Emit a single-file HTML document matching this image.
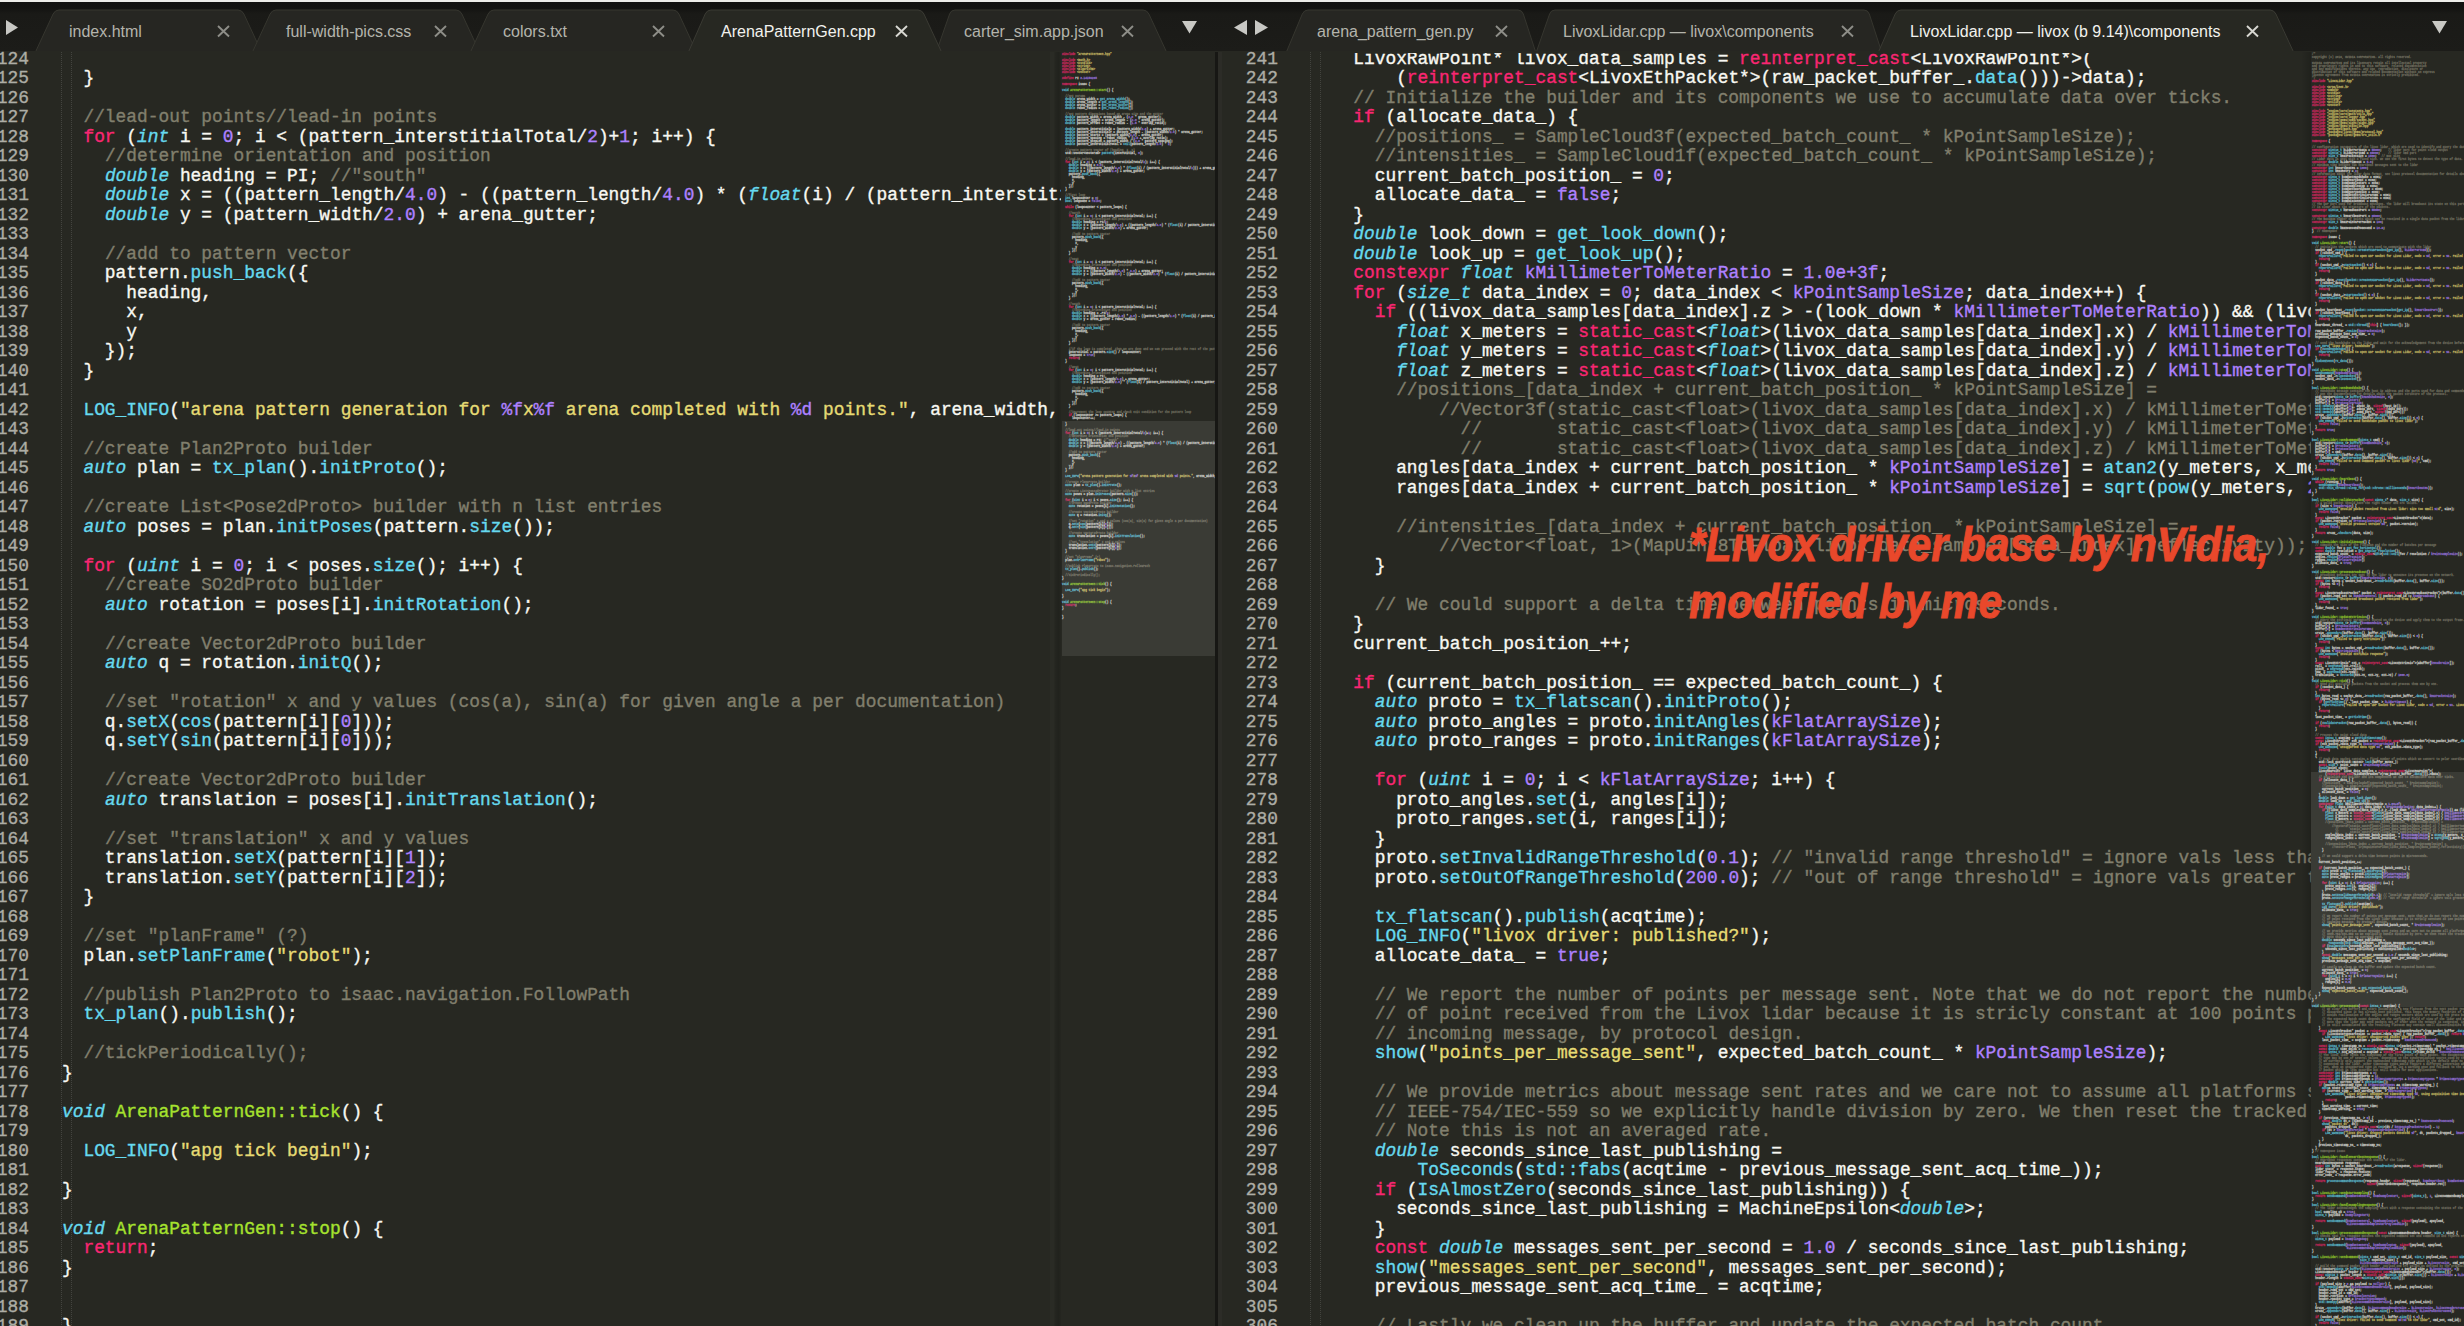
<!DOCTYPE html>
<html><head><meta charset="utf-8">
<style>
html,body{margin:0;padding:0;width:2464px;height:1326px;overflow:hidden;background:#272822;}
body{position:relative;font-family:"Liberation Sans",sans-serif;}
.abs{position:absolute}
.code,.nums{position:absolute;font-family:"Liberation Mono",monospace;font-size:17.87px;line-height:19.5px;white-space:pre;color:#F8F8F2;margin:0;-webkit-text-stroke:0.35px currentColor}
.code b{font-weight:normal}
.code i{font-style:italic;color:#66D9EF}
.cm{color:#817f6d}.str{color:#E6DB74}.num{color:#AE81FF}.kw{color:#F92672}.fn{color:#66D9EF}.ent{color:#A6E22E}
.nums{text-align:right;color:#adada5}
.clip{position:absolute;overflow:hidden}
.mm{position:absolute;font-family:"Liberation Mono",monospace;font-size:3.4px;line-height:3.02px;white-space:pre;color:#F8F8F2;margin:0;-webkit-text-stroke:0.3px currentColor;opacity:0.72;transform:scaleX(0.814);transform-origin:0 0}
.mm b{font-weight:normal}
.mm i{font-style:normal;color:#66D9EF}
.guide{position:absolute;width:1px;background:repeating-linear-gradient(to bottom,rgba(255,255,255,0.13) 0 1px,transparent 1px 2px)}
#tabbar{position:absolute;left:0;top:0;width:2464px;height:51px;background:linear-gradient(to bottom,#111110 0px,#131311 8px,#1a1a17 14px,#1c1c19 51px)}
#tabbar .strip{position:absolute;left:0;top:0;width:2464px;height:2px;background:#ecece8}
.tt{position:absolute;font-size:16px;color:#b4b4ac;white-space:pre;line-height:20px}
.tt.act{color:#f2f2ee}
.red{position:absolute;font-family:"Liberation Sans",sans-serif;font-weight:bold;font-style:italic;font-size:48px;color:#E9482B;white-space:pre;transform:scaleX(0.89);transform-origin:0 0;line-height:57px;-webkit-text-stroke:0.9px #E9482B}
</style></head><body>

<!-- LEFT PANE -->
<div class="clip" style="left:0;top:0;width:1215px;height:1326px;">
  <div class="nums" style="left:-71px;top:49.6px;width:100px;">124
125
126
127
128
129
130
131
132
133
134
135
136
137
138
139
140
141
142
143
144
145
146
147
148
149
150
151
152
153
154
155
156
157
158
159
160
161
162
163
164
165
166
167
168
169
170
171
172
173
174
175
176
177
178
179
180
181
182
183
184
185
186
187
188
189</div>
  <div class="guide" style="left:61px;top:52px;height:1274px;"></div>
  <div class="guide" style="left:71px;top:52px;height:1274px;"></div>
  <div class="clip" style="left:0;top:52.5px;width:1061px;height:1274px;">
    <div class="code" style="left:62px;top:-2.9px;">
  }

  <b class="cm">//lead-out points//lead-in points</b>
  <b class="kw">for</b> (<i>int</i> i = <b class="num">0</b>; i &lt; (pattern_interstitialTotal/<b class="num">2</b>)+<b class="num">1</b>; i++) {
    <b class="cm">//determine orientation and position</b>
    <i>double</i> heading = PI; <b class="cm">//"south"</b>
    <i>double</i> x = ((pattern_length/<b class="num">4.0</b>) - ((pattern_length/<b class="num">4.0</b>) * (<i>float</i>(i) / (pattern_interstitialTotal/<b class="num">2</b>)))) + arena_gutter;
    <i>double</i> y = (pattern_width/<b class="num">2.0</b>) + arena_gutter;

    <b class="cm">//add to pattern vector</b>
    pattern.<b class="fn">push_back</b>({
      heading,
      x,
      y
    });
  }

  <b class="fn">LOG_INFO</b>(<b class="str">"arena pattern generation for </b><b class="num">%f</b><b class="str">x</b><b class="num">%f</b><b class="str"> arena completed with </b><b class="num">%d</b><b class="str"> points."</b>, arena_width, arena_length, pattern.<b class="fn">size</b>());

  <b class="cm">//create Plan2Proto builder</b>
  <i>auto</i> plan = <b class="fn">tx_plan</b>().<b class="fn">initProto</b>();

  <b class="cm">//create List&lt;Pose2dProto&gt; builder with n list entries</b>
  <i>auto</i> poses = plan.<b class="fn">initPoses</b>(pattern.<b class="fn">size</b>());

  <b class="kw">for</b> (<i>uint</i> i = <b class="num">0</b>; i &lt; poses.<b class="fn">size</b>(); i++) {
    <b class="cm">//create SO2dProto builder</b>
    <i>auto</i> rotation = poses[i].<b class="fn">initRotation</b>();

    <b class="cm">//create Vector2dProto builder</b>
    <i>auto</i> q = rotation.<b class="fn">initQ</b>();

    <b class="cm">//set "rotation" x and y values (cos(a), sin(a) for given angle a per documentation)</b>
    q.<b class="fn">setX</b>(<b class="fn">cos</b>(pattern[i][<b class="num">0</b>]));
    q.<b class="fn">setY</b>(<b class="fn">sin</b>(pattern[i][<b class="num">0</b>]));

    <b class="cm">//create Vector2dProto builder</b>
    <i>auto</i> translation = poses[i].<b class="fn">initTranslation</b>();

    <b class="cm">//set "translation" x and y values</b>
    translation.<b class="fn">setX</b>(pattern[i][<b class="num">1</b>]);
    translation.<b class="fn">setY</b>(pattern[i][<b class="num">2</b>]);
  }

  <b class="cm">//set "planFrame" (?)</b>
  plan.<b class="fn">setPlanFrame</b>(<b class="str">"robot"</b>);

  <b class="cm">//publish Plan2Proto to isaac.navigation.FollowPath</b>
  <b class="fn">tx_plan</b>().<b class="fn">publish</b>();

  <b class="cm">//tickPeriodically();</b>
}

<i>void</i> <b class="ent">ArenaPatternGen::tick</b>() {

  <b class="fn">LOG_INFO</b>(<b class="str">"apg tick begin"</b>);

}

<i>void</i> <b class="ent">ArenaPatternGen::stop</b>() {
  <b class="kw">return</b>;
}


}</div>
  </div>
  <div class="clip" style="left:1059px;top:52px;width:156px;height:1274px;">
    <div class="mm" style="left:3px;top:0.5px;"><b class="kw">#include</b> <b class="str">"ArenaPatternGen.hpp"</b>

<b class="kw">#include</b> <b class="str">&lt;math.h&gt;</b>
<b class="kw">#include</b> <b class="str">&lt;cstdlib&gt;</b>
<b class="kw">#include</b> <b class="str">&lt;string&gt;</b>
<b class="kw">#include</b> <b class="str">&lt;algorithm&gt;</b>
<b class="kw">#include</b> <b class="str">&lt;vector&gt;</b>

<b class="kw">#define</b> PI <b class="num">3.14159265</b>

<b class="kw">namespace</b> isaac {

<i>void</i> <b class="ent">ArenaPatternGen::start</b>() {

  <b class="cm">//get params</b>
  <i>double</i> arena_width = <b class="fn">get_arena_width</b>();
  <i>double</i> arena_length = <b class="fn">get_arena_length</b>();
  <i>double</i> arena_gutter = <b class="fn">get_arena_gutter</b>();
  <i>double</i> robot_radius = <b class="fn">get_robot_radius</b>();

  <b class="cm">//set pattern dimensions based on arena size and the gutter</b>
  <i>double</i> pattern_width = arena_width - (<b class="num">2.0</b> * arena_gutter);
  <i>double</i> pattern_length = arena_length - (<b class="num">2.0</b> * arena_gutter);
  <i>double</i> pattern_offset = robot_radius - (<b class="num">1.5</b> * overlap_ratio);

  <i>double</i> pattern_interstitialX = (pattern_width/<b class="num">2.0</b>) + arena_gutter;
  <i>double</i> pattern_interstitialY = pattern_length - (pattern_width/<b class="num">2.0</b>) * arena_gutter;
  <i>double</i> pattern_startX = (pattern_width/<b class="num">2.0</b>) - arena_gutter;
  <i>double</i> pattern_spacing = robot_radius * (<b class="num">1.5</b> + overlap_ratio);
  <i>double</i> pattern_stepLen = pattern_width / (<b class="num">2.0</b> * pattern_spacing);
  <i>double</i> pattern_interstitialTotal = <b class="fn">ceil</b>(pattern_length/<b class="num">2.0</b>) * <b class="num">2</b>;

  <b class="cm">//create pattern vector of (heading, x, y)</b>
  std::vector&lt;Vector3d&gt; <b class="fn">pattern</b>(interstitial, <b class="num">0</b>);

  <b class="cm">//lead-in points</b>
  <b class="kw">for</b> (<i>int</i> i = <b class="num">0</b>; i &lt; (pattern_interstitialTotal/<b class="num">2</b>); i++) {
    <i>double</i> heading = <b class="num">0.0</b>;
    <i>double</i> x = ((pattern_length/<b class="num">4.0</b>) * (<i>float</i>(i) / (pattern_interstitialTotal/<b class="num">2</b>))) + arena_gutter;
    <i>double</i> y = (pattern_width/<b class="num">2.0</b>) + arena_gutter;
    pattern.<b class="fn">push_back</b>({
      heading,
      x,
      y
    });
  }

  <b class="cm">//first loop</b>
  <i>int</i> loopCounter = <b class="num">0</b>;
  <i>bool</i> loopDone = <b class="num">false</b>;

  <b class="kw">while</b> (loopCounter &lt; pattern_loops) {

    <b class="cm">//north</b>
    <b class="kw">for</b> (<i>int</i> i = <b class="num">0</b>; i &lt; pattern_interstitialTotal; i++) {
      <b class="cm">//determine orientation and position</b>
      <i>double</i> heading = PI/<b class="num">2</b>;
      <i>double</i> x = (pattern_length/<b class="num">2.0</b>) + ((pattern_length/<b class="num">4.0</b>) * (<i>float</i>(i) / pattern_interstitialTotal)) + arena_gutter;
      <i>double</i> y = (pattern_width/<b class="num">2.0</b>) + arena_gutter;

      <b class="cm">//add to pattern vector</b>
      pattern.<b class="fn">push_back</b>({
        heading,
        x,
        y
      });
    }

    <b class="cm">//east</b>
    <b class="kw">for</b> (<i>int</i> i = <b class="num">0</b>; i &lt; pattern_interstitialTotal; i++) {
      <b class="cm">//determine orientation and position</b>
      <i>double</i> heading = <b class="num">0.0</b>;
      <i>double</i> x = ((pattern_length/<b class="num">4.0</b>) * <b class="num">3.0</b>) + arena_gutter;
      <i>double</i> y = (pattern_width/<b class="num">2.0</b>) - ((pattern_width/<b class="num">2.0</b>) * (<i>float</i>(i) / pattern_interstitialTotal)) + arena_gutter;

      <b class="cm">//add to pattern vector</b>
      pattern.<b class="fn">push_back</b>({
        heading,
        x,
        y
      });
    }

    <b class="cm">//south</b>
    <b class="kw">for</b> (<i>int</i> i = <b class="num">0</b>; i &lt; pattern_interstitialTotal; i++) {
      <b class="cm">//determine orientation and position</b>
      <i>double</i> heading = -PI/<b class="num">2</b>;
      <i>double</i> x = ((pattern_length/<b class="num">4.0</b>) * <b class="num">3.0</b>) - ((pattern_length/<b class="num">2.0</b>) * (<i>float</i>(i) / pattern_interstitialTotal));
      <i>double</i> y = arena_gutter + robot_radius;

      <b class="cm">//add to pattern vector</b>
      pattern.<b class="fn">push_back</b>({
        heading,
        x,
        y
      });
    }

    <b class="cm">//if the loop is completed, then we are done and we can proceed with the rest of the pattern</b>
    interstitial = pattern.<b class="fn">size</b>() / loopCounter;
    loopDone = <b class="num">true</b>;
    <b class="kw">return</b>;
  }

    <b class="cm">//west</b>
    <b class="kw">for</b> (<i>int</i> i = <b class="num">0</b>; i &lt; pattern_interstitialTotal; i++) {
      <b class="cm">//determine orientation and position</b>
      <i>double</i> heading = PI;
      <i>double</i> x = (pattern_length/<b class="num">4.0</b>) + arena_gutter;
      <i>double</i> y = (pattern_width/<b class="num">2.0</b>) * (<i>float</i>(i) / pattern_interstitialTotal) + arena_gutter;

      <b class="cm">//add to pattern vector</b>
      pattern.<b class="fn">push_back</b>({
        heading,
        x,
        y
      });
    }

    <b class="cm">//increment the loop counter and check exit condition for the pattern loop</b>
    <b class="kw">if</b> (loopCounter &gt;= pattern_loops) {
      loopCounter++;

  }

  <b class="cm">//lead-out points//lead-in points</b>
  <b class="kw">for</b> (<i>int</i> i = <b class="num">0</b>; i &lt; (pattern_interstitialTotal/<b class="num">2</b>)+<b class="num">1</b>; i++) {
    <b class="cm">//determine orientation and position</b>
    <i>double</i> heading = PI; <b class="cm">//"south"</b>
    <i>double</i> x = ((pattern_length/<b class="num">4.0</b>) - ((pattern_length/<b class="num">4.0</b>) * (<i>float</i>(i) / (pattern_interstitialTotal/<b class="num">2</b>)))) + arena_gutter;
    <i>double</i> y = (pattern_width/<b class="num">2.0</b>) + arena_gutter;

    <b class="cm">//add to pattern vector</b>
    pattern.<b class="fn">push_back</b>({
      heading,
      x,
      y
    });
  }

  <b class="fn">LOG_INFO</b>(<b class="str">"arena pattern generation for </b><b class="num">%f</b><b class="str">x</b><b class="num">%f</b><b class="str"> arena completed with </b><b class="num">%d</b><b class="str"> points."</b>, arena_width, arena_length, pattern.<b class="fn">size</b>());

  <b class="cm">//create Plan2Proto builder</b>
  <i>auto</i> plan = <b class="fn">tx_plan</b>().<b class="fn">initProto</b>();

  <b class="cm">//create List&lt;Pose2dProto&gt; builder with n list entries</b>
  <i>auto</i> poses = plan.<b class="fn">initPoses</b>(pattern.<b class="fn">size</b>());

  <b class="kw">for</b> (<i>uint</i> i = <b class="num">0</b>; i &lt; poses.<b class="fn">size</b>(); i++) {
    <b class="cm">//create SO2dProto builder</b>
    <i>auto</i> rotation = poses[i].<b class="fn">initRotation</b>();

    <b class="cm">//create Vector2dProto builder</b>
    <i>auto</i> q = rotation.<b class="fn">initQ</b>();

    <b class="cm">//set "rotation" x and y values (cos(a), sin(a) for given angle a per documentation)</b>
    q.<b class="fn">setX</b>(<b class="fn">cos</b>(pattern[i][<b class="num">0</b>]));
    q.<b class="fn">setY</b>(<b class="fn">sin</b>(pattern[i][<b class="num">0</b>]));

    <b class="cm">//create Vector2dProto builder</b>
    <i>auto</i> translation = poses[i].<b class="fn">initTranslation</b>();

    <b class="cm">//set "translation" x and y values</b>
    translation.<b class="fn">setX</b>(pattern[i][<b class="num">1</b>]);
    translation.<b class="fn">setY</b>(pattern[i][<b class="num">2</b>]);
  }

  <b class="cm">//set "planFrame" (?)</b>
  plan.<b class="fn">setPlanFrame</b>(<b class="str">"robot"</b>);

  <b class="cm">//publish Plan2Proto to isaac.navigation.FollowPath</b>
  <b class="fn">tx_plan</b>().<b class="fn">publish</b>();

  <b class="cm">//tickPeriodically();</b>
}

<i>void</i> <b class="ent">ArenaPatternGen::tick</b>() {

  <b class="fn">LOG_INFO</b>(<b class="str">"apg tick begin"</b>);

}

<i>void</i> <b class="ent">ArenaPatternGen::stop</b>() {
  <b class="kw">return</b>;
}


}
</div>
  </div>
  <div class="abs" style="left:1062px;top:421px;width:153px;height:235px;background:rgba(255,255,255,0.09)"></div>
</div>
<div class="abs" style="left:1215px;top:52px;width:3px;height:1274px;background:#171714"></div>
<div class="abs" style="left:1218px;top:52px;width:4px;height:1274px;background:#2c2c27"></div>
<div class="abs" style="left:1050px;top:52px;width:4px;height:1274px;background:rgba(255,255,255,0.015)"></div>
<div class="abs" style="left:1055px;top:52px;width:6px;height:1274px;background:linear-gradient(to right,rgba(0,0,0,0.06),rgba(0,0,0,0.16) 60%,rgba(0,0,0,0.05))"></div>

<!-- RIGHT PANE -->
<div class="clip" style="left:1218px;top:0;width:1246px;height:1326px;">
  <div class="nums" style="left:-40px;top:49.6px;width:100px;">241
242
243
244
245
246
247
248
249
250
251
252
253
254
255
256
257
258
259
260
261
262
263
264
265
266
267
268
269
270
271
272
273
274
275
276
277
278
279
280
281
282
283
284
285
286
287
288
289
290
291
292
293
294
295
296
297
298
299
300
301
302
303
304
305
306</div>
  <div class="guide" style="left:92px;top:52px;height:1274px;"></div>
  <div class="guide" style="left:102px;top:52px;height:1274px;"></div>
  <div class="clip" style="left:0;top:52.5px;width:1093px;height:1274px;">
    <div class="code" style="left:92.4px;top:-2.9px;">    LivoxRawPoint* livox_data_samples = <b class="kw">reinterpret_cast</b>&lt;LivoxRawPoint*&gt;(
        (<b class="kw">reinterpret_cast</b>&lt;LivoxEthPacket*&gt;(raw_packet_buffer_.<b class="fn">data</b>()))-&gt;data);
    <b class="cm">// Initialize the builder and its components we use to accumulate data over ticks.</b>
    <b class="kw">if</b> (allocate_data_) {
      <b class="cm">//positions_ = SampleCloud3f(expected_batch_count_ * kPointSampleSize);</b>
      <b class="cm">//intensities_ = SampleCloud1f(expected_batch_count_ * kPointSampleSize);</b>
      current_batch_position_ = <b class="num">0</b>;
      allocate_data_ = <b class="num">false</b>;
    }
    <i>double</i> look_down = <b class="fn">get_look_down</b>();
    <i>double</i> look_up = <b class="fn">get_look_up</b>();
    <b class="kw">constexpr</b> <i>float</i> <b class="num">kMillimeterToMeterRatio</b> = <b class="num">1.0e+3f</b>;
    <b class="kw">for</b> (<i>size_t</i> data_index = <b class="num">0</b>; data_index &lt; <b class="num">kPointSampleSize</b>; data_index++) {
      <b class="kw">if</b> ((livox_data_samples[data_index].z &gt; -(look_down * <b class="num">kMillimeterToMeterRatio</b>)) &amp;&amp; (livox_data_samples[data_index].z &lt; (look_up * <b class="num">kMillimeterToMeterRatio</b>))) {
        <i>float</i> x_meters = <b class="kw">static_cast</b>&lt;<i>float</i>&gt;(livox_data_samples[data_index].x) / <b class="num">kMillimeterToMeterRatio</b>;
        <i>float</i> y_meters = <b class="kw">static_cast</b>&lt;<i>float</i>&gt;(livox_data_samples[data_index].y) / <b class="num">kMillimeterToMeterRatio</b>;
        <i>float</i> z_meters = <b class="kw">static_cast</b>&lt;<i>float</i>&gt;(livox_data_samples[data_index].z) / <b class="num">kMillimeterToMeterRatio</b>;
        <b class="cm">//positions_[data_index + current_batch_position_ * kPointSampleSize] =</b>
            <b class="cm">//Vector3f(static_cast&lt;float&gt;(livox_data_samples[data_index].x) / kMillimeterToMeterRatio,</b>
              <b class="cm">//       static_cast&lt;float&gt;(livox_data_samples[data_index].y) / kMillimeterToMeterRatio,</b>
              <b class="cm">//       static_cast&lt;float&gt;(livox_data_samples[data_index].z) / kMillimeterToMeterRatio);</b>
        angles[data_index + current_batch_position_ * <b class="num">kPointSampleSize</b>] = <b class="fn">atan2</b>(y_meters, x_meters);
        ranges[data_index + current_batch_position_ * <b class="num">kPointSampleSize</b>] = <b class="fn">sqrt</b>(<b class="fn">pow</b>(y_meters, <b class="num">2</b>) + <b class="fn">pow</b>(x_meters, <b class="num">2</b>));

        <b class="cm">//intensities_[data_index + current_batch_position_ * kPointSampleSize] =</b>
            <b class="cm">//Vector&lt;float, 1&gt;(MapUint8ToFloat(livox_data_samples[data_index].reflectivity));</b>
      }

      <b class="cm">// We could support a delta time between points in microseconds.</b>
    }
    current_batch_position_++;

    <b class="kw">if</b> (current_batch_position_ == expected_batch_count_) {
      <i>auto</i> proto = <b class="fn">tx_flatscan</b>().<b class="fn">initProto</b>();
      <i>auto</i> proto_angles = proto.<b class="fn">initAngles</b>(<b class="num">kFlatArraySize</b>);
      <i>auto</i> proto_ranges = proto.<b class="fn">initRanges</b>(<b class="num">kFlatArraySize</b>);

      <b class="kw">for</b> (<i>uint</i> i = <b class="num">0</b>; i &lt; <b class="num">kFlatArraySize</b>; i++) {
        proto_angles.<b class="fn">set</b>(i, angles[i]);
        proto_ranges.<b class="fn">set</b>(i, ranges[i]);
      }
      proto.<b class="fn">setInvalidRangeThreshold</b>(<b class="num">0.1</b>); <b class="cm">// "invalid range threshold" = ignore vals less than this</b>
      proto.<b class="fn">setOutOfRangeThreshold</b>(<b class="num">200.0</b>); <b class="cm">// "out of range threshold" = ignore vals greater than this</b>

      <b class="fn">tx_flatscan</b>().<b class="fn">publish</b>(acqtime);
      <b class="fn">LOG_INFO</b>(<b class="str">"livox driver: published?"</b>);
      allocate_data_ = <b class="num">true</b>;

      <b class="cm">// We report the number of points per message sent. Note that we do not report the number</b>
      <b class="cm">// of point received from the Livox lidar because it is stricly constant at 100 points per</b>
      <b class="cm">// incoming message, by protocol design.</b>
      <b class="fn">show</b>(<b class="str">"points_per_message_sent"</b>, expected_batch_count_ * <b class="num">kPointSampleSize</b>);

      <b class="cm">// We provide metrics about message sent rates and we care not to assume all platforms support</b>
      <b class="cm">// IEEE-754/IEC-559 so we explicitly handle division by zero. We then reset the tracked time.</b>
      <b class="cm">// Note this is not an averaged rate.</b>
      <i>double</i> seconds_since_last_publishing =
          <b class="fn">ToSeconds</b>(<b class="fn">std::fabs</b>(acqtime - previous_message_sent_acq_time_));
      <b class="kw">if</b> (<b class="fn">IsAlmostZero</b>(seconds_since_last_publishing)) {
        seconds_since_last_publishing = MachineEpsilon&lt;<i>double</i>&gt;;
      }
      <b class="kw">const</b> <i>double</i> messages_sent_per_second = <b class="num">1.0</b> / seconds_since_last_publishing;
      <b class="fn">show</b>(<b class="str">"messages_sent_per_second"</b>, messages_sent_per_second);
      previous_message_sent_acq_time_ = acqtime;

      <b class="cm">// Lastly we clean up the buffer and update the expected batch count.</b></div>
  </div>
  <div class="clip" style="left:1093px;top:52px;width:153px;height:1274px;">
    <div class="mm" style="left:0.5px;top:0.5px;"><b class="cm">/*</b>
<b class="cm">Copyright (c) 2019, NVIDIA CORPORATION. All rights reserved.</b>

<b class="cm">NVIDIA CORPORATION and its licensors retain all intellectual property</b>
<b class="cm">and proprietary rights in and to this software, related documentation</b>
<b class="cm">and any modifications thereto. Any use, reproduction, disclosure or</b>
<b class="cm">distribution of this software and related documentation without an express</b>
<b class="cm">license agreement from NVIDIA CORPORATION is strictly prohibited.</b>
<b class="cm">*/</b>
<b class="kw">#include</b> <b class="str">"LivoxLidar.hpp"</b>

<b class="kw">#include</b> <b class="str">&lt;arpa/inet.h&gt;</b>
<b class="kw">#include</b> <b class="str">&lt;cmath&gt;</b>
<b class="kw">#include</b> <b class="str">&lt;cstdio&gt;</b>
<b class="kw">#include</b> <b class="str">&lt;cstring&gt;</b>
<b class="kw">#include</b> <b class="str">&lt;string&gt;</b>
<b class="kw">#include</b> <b class="str">&lt;utility&gt;</b>
<b class="kw">#include</b> <b class="str">&lt;vector&gt;</b>

<b class="kw">#include</b> <b class="str">"engine/core/constants.hpp"</b>
<b class="kw">#include</b> <b class="str">"engine/core/math/utils.hpp"</b>
<b class="kw">#include</b> <b class="str">"engine/core/logger.hpp"</b>
<b class="kw">#include</b> <b class="str">"engine/gems/coms/socket.hpp"</b>
<b class="kw">#include</b> <b class="str">"engine/gems/sight/sight.hpp"</b>
<b class="kw">#include</b> <b class="str">"engine/gems/state/io.hpp"</b>
<b class="kw">#include</b> <b class="str">"messages/math.hpp"</b>
<b class="kw">#include</b> <b class="str">"packages/livox/gems/protocol.hpp"</b>
<b class="kw">#include</b> <b class="str">"packages/livox/gems/crc_utils.h"</b>

<b class="kw">namespace</b> {

<b class="cm">// Configuration parameters of the livox lidar, which are used to identify and query the data.</b>
<b class="kw">constexpr</b> <i>uint16_t</i> kLidarPortData = <b class="num">55000</b>;    <b class="cm">// lidar port for point cloud output</b>
<b class="kw">constexpr</b> <i>uint16_t</i> kLidarPortCmd = <b class="num">65000</b>;     <b class="cm">// lidar cmd port</b>
<b class="kw">constexpr</b> <i>size_t</i> kMaxPacketSize = <b class="num">1500</b>;   <b class="cm">// max size</b>
<b class="cm">// Lidar data is sent with a fixed size. We use the first bytes to detect the type of data.</b>
<b class="kw">constexpr</b> <i>double</i> kLidarTimeout = <b class="num">5.0</b>;
<b class="cm">// Minimum time between two heartbeat messages sent to the lidar</b>
<b class="kw">constexpr</b> <i>int</i> kHeartbeatMs = <b class="num">1000</b>;
<b class="kw">constexpr</b> <i>int</i> kMaxRetry = <b class="num">3</b>;
<b class="cm">// Information about the lidar data format, see livox protocol documentation for details about each field of the packets</b>
<b class="kw">constexpr</b> <i>uint8_t</i> kCmdSetHandshake = 0x01;
<b class="kw">constexpr</b> <i>uint8_t</i> kCmdHeartbeat = 0x03;
<b class="kw">constexpr</b> <i>uint8_t</i> kCmdSampleStart = 0x04;
<b class="kw">constexpr</b> <i>uint8_t</i> kCmdSampleStop = 0x04;
<b class="kw">constexpr</b> <i>uint8_t</i> kCmdSetCoordinate = 0x05;
<b class="kw">constexpr</b> <i>uint8_t</i> kCmdQueryDevice = 0x02;
<b class="kw">constexpr</b> <i>uint8_t</i> kCmdSetExtrinsicParams = 0x01;
<b class="kw">constexpr</b> <i>uint8_t</i> kCmdGetExtrinsicParams = 0x02;
<b class="kw">constexpr</b> <i>uint8_t</i> kCmdDisconnect = 0x06;
<b class="cm">// The UDP port used for broadcast messages. The lidar will broadcast its state on this port. The documentation</b>
<b class="cm">// is clear about the structure of the packets.</b>
<b class="kw">constexpr</b> <i>uint16_t</i> kBroadcastPort = <b class="num">55000</b>;

<b class="kw">constexpr</b> <i>uint16_t</i> kHeartbeatPort = <b class="num">65000</b>;
<b class="cm">// The maximum number of points which can be received in a single data packet from the lidar.</b>
<b class="kw">constexpr</b> <i>size_t</i> kMaxPointsPerPacket = <b class="num">100</b>;

<b class="kw">constexpr</b> <i>double</i> kNanosecondToSecond = <b class="num">1e-9</b>;
}  <b class="cm">// namespace</b>

<b class="kw">namespace</b> isaac {

<i>void</i> <b class="ent">LivoxLidar::start</b>() {
  <b class="cm">// Initialize the sockets which are used to communicate with the lidar</b>
  socket_cmd_.<b class="fn">reset</b>(<b class="fn">Socket::CreateTxUDPSocket</b>(<b class="fn">get_ip</b>(), <b class="num">kLidarPortCmd</b>));
  <b class="kw">if</b> (!socket_cmd_) {
    <b class="fn">reportFailure</b>(<b class="str">"Failed to open UDP socket for Livox Lidar, code = </b><b class="num">%d</b><b class="str">, error = </b><b class="num">%s</b><b class="str">. Failed to create cmd socket for Livox lidar"</b>);
    <b class="kw">return</b>;
  }
  <b class="kw">if</b> (socket_cmd_-&gt;<b class="fn">startSocket</b>() &lt; <b class="num">0</b>) {
    <b class="fn">reportFailure</b>(<b class="str">"Failed to open UDP socket for Livox Lidar, code = </b><b class="num">%d</b><b class="str">, error = </b><b class="num">%s</b><b class="str">. Failed to start cmd socket for Livox lidar. Check ip address configuration."</b>, <b class="fn">get_ip</b>());
    <b class="kw">return</b>;
  }

  socket_data_.<b class="fn">reset</b>(<b class="fn">Socket::CreateRxUDPSocket</b>(<b class="fn">get_ip</b>(), <b class="num">kLidarPortData</b>));
  <b class="kw">if</b> (!socket_data_) {
    <b class="fn">reportFailure</b>(<b class="str">"Failed to open UDP socket for Livox Lidar, code = </b><b class="num">%d</b><b class="str">, error = </b><b class="num">%s</b><b class="str">. Failed to create data socket for Livox lidar"</b>);
    <b class="kw">return</b>;
  }
  <b class="kw">if</b> (socket_data_-&gt;<b class="fn">startSocket</b>() &lt; <b class="num">0</b>) {
    <b class="fn">reportFailure</b>(<b class="str">"Failed to open UDP socket for Livox Lidar, code = </b><b class="num">%d</b><b class="str">, error = </b><b class="num">%s</b><b class="str">. Failed to start data socket for Livox lidar. Check data port configuration."</b>, <b class="fn">get_port</b>());
    <b class="kw">return</b>;
  }

  socket_heartbeat_.<b class="fn">reset</b>(<b class="fn">Socket::CreateRxUDPSocket</b>(<b class="fn">get_ip</b>(), <b class="num">kHeartbeatPort</b>));
  <b class="kw">if</b> (!socket_heartbeat_) {
    <b class="fn">reportFailure</b>(<b class="str">"Failed to open UDP socket for Livox Lidar, code = </b><b class="num">%d</b><b class="str">, error = </b><b class="num">%s</b><b class="str">. Failed to create heartbeat socket"</b>);
    <b class="kw">return</b>;
  }
  heartbeat_thread_ = <b class="fn">std::thread</b>([<b class="kw">this</b>] { <b class="fn">heartbeat</b>(); });

  raw_packet_buffer_.<b class="fn">resize</b>(<b class="num">kMaxPacketSize</b>);
  previous_message_sent_acq_time_ = <b class="num">0</b>;
  expected_batch_count_ = <b class="num">0</b>;

  <b class="cm">// Send the handshake to the lidar and wait for the acknowledgement from the device before starting.</b>
  <b class="fn">LOG_INFO</b>(<b class="str">"livox driver: handshake"</b>);
  <b class="kw">if</b> (!<b class="fn">sendHandshake</b>()) {
    <b class="fn">reportFailure</b>(<b class="str">"Failed to open UDP socket for Livox Lidar, code = </b><b class="num">%d</b><b class="str">, error = </b><b class="num">%s</b><b class="str">. Failed to perform handshake with the lidar"</b>);
    <b class="kw">return</b>;
  }
  <b class="fn">tickOnEvent</b>(<b class="fn">rx_data</b>());
}

<i>void</i> <b class="ent">LivoxLidar::stop</b>() {
  <b class="fn">sendCommand</b>(<b class="num">kCmdSampleStop</b>);
  socket_cmd_-&gt;<b class="fn">closeSocket</b>();
  socket_data_-&gt;<b class="fn">closeSocket</b>();
}

<i>bool</i> <b class="ent">LivoxLidar::sendHandshake</b>() {
  <b class="cm">// Handshake message contains the host ip address and the ports used for data and commands.</b>
  <b class="cm">// See the documentation for details about the packet structure of the protocol.</b>
  std::vector&lt;<i>uint8_t</i>&gt; <b class="fn">buffer</b>(<b class="num">kHandshakeSize</b>, <b class="num">0</b>);
  buffer[<b class="num">0</b>] = <b class="num">kProtocolStart</b>;
  buffer[<b class="num">1</b>] = <b class="num">kProtocolVersion</b>;
  <b class="fn">std::memcpy</b>(&amp;buffer[<b class="num">11</b>], &amp;host_ip, <b class="kw">sizeof</b>(host_ip));
  <b class="fn">std::memcpy</b>(&amp;buffer[<b class="num">15</b>], &amp;data_port, <b class="kw">sizeof</b>(data_port));
  <b class="fn">std::memcpy</b>(&amp;buffer[<b class="num">17</b>], &amp;cmd_port, <b class="kw">sizeof</b>(cmd_port));
  crc16_.<b class="fn">appendCrc</b>(buffer.<b class="fn">data</b>(), buffer.<b class="fn">size</b>());
  <b class="kw">if</b> (socket_cmd_-&gt;<b class="fn">writePacket</b>(buffer.<b class="fn">data</b>(), buffer.<b class="fn">size</b>()) &lt; <b class="num">0</b>) {
    <b class="fn">LOG_ERROR</b>(<b class="str">"Failed to send handshake packet to livox lidar"</b>);
    <b class="kw">return</b> <b class="num">false</b>;
  }
  <b class="kw">return</b> <b class="num">true</b>;
}

<i>bool</i> <b class="ent">LivoxLidar::sendCommand</b>(<i>uint8_t</i> cmd) {
  std::vector&lt;<i>uint8_t</i>&gt; <b class="fn">buffer</b>(<b class="num">kCommandSize</b>, <b class="num">0</b>);
  buffer[<b class="num">0</b>] = <b class="num">kProtocolStart</b>;
  buffer[<b class="num">1</b>] = <b class="num">kProtocolVersion</b>;
  buffer[<b class="num">9</b>] = cmd;
  crc16_.<b class="fn">appendCrc</b>(buffer.<b class="fn">data</b>(), buffer.<b class="fn">size</b>());
  <b class="kw">if</b> (socket_cmd_-&gt;<b class="fn">writePacket</b>(buffer.<b class="fn">data</b>(), buffer.<b class="fn">size</b>()) &lt; <b class="num">0</b>) {
    <b class="fn">LOG_ERROR</b>(<b class="str">"Failed to send command packet to livox lidar (</b><b class="num">%d</b><b class="str">)"</b>, cmd);
    <b class="kw">return</b> <b class="num">false</b>;
  }
  <b class="kw">return</b> <b class="num">true</b>;
}

<i>void</i> <b class="ent">LivoxLidar::heartbeat</b>() {
  <b class="kw">while</b> (running_) {
    <b class="fn">sendCommand</b>(<b class="num">kCmdHeartbeat</b>);
    <b class="fn">std::this_thread::sleep_for</b>(<b class="fn">std::chrono::milliseconds</b>(<b class="num">kHeartbeatMs</b>));
  }
}

<i>bool</i> <b class="ent">LivoxLidar::validatePacket</b>(<b class="kw">const</b> <i>uint8_t</i>* data, <i>size_t</i> size) {
  <b class="cm">// A valid packet should have the right header and crc values.</b>
  <b class="kw">if</b> (size &lt; <b class="num">kHeaderSize</b>) {
    <b class="fn">LOG_WARNING</b>(<b class="str">"Invalid packet received from Livox lidar: size too small </b><b class="num">%z</b><b class="str">d"</b>, size);
    <b class="kw">return</b> <b class="num">false</b>;
  }
  <b class="kw">const</b> LivoxEthPacket* packet = <b class="kw">reinterpret_cast</b>&lt;LivoxEthPacket*&gt;(data);
  <b class="kw">if</b> (packet-&gt;version != <b class="num">kProtocolVersion</b>) {
    <b class="fn">LOG_WARNING</b>(<b class="str">"Invalid protocol version </b><b class="num">%d</b><b class="str">"</b>, packet-&gt;version);
    <b class="kw">return</b> <b class="num">false</b>;
  }
  <b class="kw">return</b> crc32_.<b class="fn">checkCrc</b>(data, size);
}

<i>void</i> <b class="ent">LivoxLidar::initializeScan</b>() {
  <b class="cm">// Compute the size of the flatscan and the number of batches per message</b>
  <b class="kw">const</b> <i>double</i> fov = <b class="fn">get_fov_horizontal</b>();
  <b class="kw">const</b> <i>double</i> resolution = <b class="fn">get_angular_resolution</b>();
  expected_batch_count_ = <b class="kw">static_cast</b>&lt;<i>int</i>&gt;(<b class="fn">std::ceil</b>(fov / resolution / <b class="num">kPointSampleSize</b>));
  angles.<b class="fn">resize</b>(<b class="num">kFlatArraySize</b>);
  ranges.<b class="fn">resize</b>(<b class="num">kFlatArraySize</b>);
  allocate_data_ = <b class="num">true</b>;
}

<i>void</i> <b class="ent">LivoxLidar::processBroadcast</b>() {
  <b class="cm">// Broadcast messages are sent by the lidar to announce its presence on the network.</b>
  std::vector&lt;<i>uint8_t</i>&gt; <b class="fn">buffer</b>(<b class="num">kMaxPacketSize</b>, <b class="num">0</b>);
  <b class="kw">const</b> <i>int</i> bytes = socket_heartbeat_-&gt;<b class="fn">readPacket</b>(buffer.<b class="fn">data</b>(), buffer.<b class="fn">size</b>());
  <b class="kw">if</b> (bytes &lt;= <b class="num">0</b>) {
    <b class="kw">return</b>;
  }
  <b class="kw">const</b> LivoxBroadcastPacket* packet = <b class="kw">reinterpret_cast</b>&lt;LivoxBroadcastPacket*&gt;(buffer.<b class="fn">data</b>());
  <b class="kw">if</b> (packet-&gt;cmd_set != <b class="num">kCmdSetGeneral</b> || packet-&gt;cmd_id != <b class="num">kCmdBroadcast</b>) {
    <b class="fn">LOG_WARNING</b>(<b class="str">"Unexpected broadcast packet received from lidar"</b>);
    <b class="kw">return</b>;
  }
  lidar_found_ = <b class="num">true</b>;
}

<i>void</i> <b class="ent">LivoxLidar::updateExtrinsics</b>() {
  <b class="cm">// Query the extrinsic parameters stored on the device and apply them to the output frame.</b>
  std::vector&lt;<i>uint8_t</i>&gt; <b class="fn">buffer</b>(<b class="num">kCommandSize</b>, <b class="num">0</b>);
  buffer[<b class="num">0</b>] = <b class="num">kProtocolStart</b>;
  buffer[<b class="num">9</b>] = <b class="num">kCmdGetExtrinsicParams</b>;
  crc16_.<b class="fn">appendCrc</b>(buffer.<b class="fn">data</b>(), buffer.<b class="fn">size</b>());
  <b class="kw">if</b> (socket_cmd_-&gt;<b class="fn">writePacket</b>(buffer.<b class="fn">data</b>(), buffer.<b class="fn">size</b>()) &lt; <b class="num">0</b>) {
    <b class="fn">LOG_ERROR</b>(<b class="str">"Failed to query extrinsics"</b>);
    <b class="kw">return</b>;
  }
  <b class="kw">const</b> <i>int</i> bytes = socket_cmd_-&gt;<b class="fn">readPacket</b>(buffer.<b class="fn">data</b>(), buffer.<b class="fn">size</b>());
  <b class="kw">if</b> (bytes &lt; <b class="num">kExtrinsicSize</b>) {
    <b class="fn">LOG_WARNING</b>(<b class="str">"Invalid extrinsic response"</b>);
    <b class="kw">return</b>;
  }
  <b class="kw">const</b> LivoxExtrinsic* ext = <b class="kw">reinterpret_cast</b>&lt;LivoxExtrinsic*&gt;(&amp;buffer[<b class="num">kHeaderSize</b>]);
  roll_ = <b class="fn">DegToRad</b>(ext-&gt;roll);
  pitch_ = <b class="fn">DegToRad</b>(ext-&gt;pitch);
  yaw_ = <b class="fn">DegToRad</b>(ext-&gt;yaw);
  translation_ = <b class="fn">Vector3d</b>(ext-&gt;x, ext-&gt;y, ext-&gt;z) / <b class="num">1000.0</b>;
}
<i>void</i> <b class="ent">LivoxLidar::tick</b>() {
  <b class="cm">// Read all available packets from the socket and process them one by one.</b>
  <b class="kw">if</b> (!socket_data_) {
    <b class="kw">return</b>;
  }
  <i>int</i> bytes_read = socket_data_-&gt;<b class="fn">readPacket</b>(raw_packet_buffer_.<b class="fn">data</b>(), <b class="num">kMaxPacketSize</b>);
  <b class="kw">if</b> (bytes_read &lt;= <b class="num">0</b>) {
    <b class="kw">if</b> (<b class="fn">getTickTime</b>() - last_packet_time_ &gt; <b class="num">kLidarTimeout</b>) {
      <b class="fn">reportFailure</b>(<b class="str">"Failed to open UDP socket for Livox Lidar, code = </b><b class="num">%d</b><b class="str">, error = </b><b class="num">%s</b><b class="str">. Livox lidar timed out. No data received for </b><b class="num">%f</b><b class="str"> seconds"</b>, <b class="num">kLidarTimeout</b>);
    }
    <b class="kw">return</b>;
  }
  last_packet_time_ = <b class="fn">getTickTime</b>();

  <b class="kw">if</b> (!<b class="fn">validatePacket</b>(raw_packet_buffer_.<b class="fn">data</b>(), bytes_read)) {
    <b class="kw">return</b>;
  }

  <b class="cm">// Process the point cloud data</b>
  <b class="kw">const</b> <i>int64_t</i> acqtime = <b class="fn">getTickTimestamp</b>();
  <b class="kw">const</b> LivoxEthPacket* eth_packet = <b class="kw">reinterpret_cast</b>&lt;LivoxEthPacket*&gt;(raw_packet_buffer_.<b class="fn">data</b>());
  <b class="kw">if</b> (eth_packet-&gt;data_type != <b class="num">kDataTypeCartesian</b>) {
    <b class="fn">LOG_WARNING</b>(<b class="str">"Unsupported data type </b><b class="num">%d</b><b class="str">"</b>, eth_packet-&gt;data_type);
    <b class="kw">return</b>;
  }
  {
    <b class="cm">// Each data packet contains a fixed number of points which we convert to polar coordinates.</b>
    std::lock_guard&lt;std::mutex&gt; <b class="fn">lock</b>(buffer_mutex_);
    <b class="kw">const</b> <i>size_t</i> point_count = <b class="num">kPointSampleSize</b>;
    (<i>void</i>)point_count;
    LivoxRawPoint* livox_data_samples = <b class="kw">reinterpret_cast</b>&lt;LivoxRawPoint*&gt;(
        (<b class="kw">reinterpret_cast</b>&lt;LivoxEthPacket*&gt;(raw_packet_buffer_.<b class="fn">data</b>()))-&gt;data);
    <b class="cm">// Initialize the builder and its components we use to accumulate data over ticks.</b>
    <b class="kw">if</b> (allocate_data_) {
      <b class="cm">//positions_ = SampleCloud3f(expected_batch_count_ * kPointSampleSize);</b>
      <b class="cm">//intensities_ = SampleCloud1f(expected_batch_count_ * kPointSampleSize);</b>
      current_batch_position_ = <b class="num">0</b>;
      allocate_data_ = <b class="num">false</b>;
    }
    <i>double</i> look_down = <b class="fn">get_look_down</b>();
    <i>double</i> look_up = <b class="fn">get_look_up</b>();
    <b class="kw">constexpr</b> <i>float</i> kMillimeterToMeterRatio = <b class="num">1.0e+3f</b>;
    <b class="kw">for</b> (<i>size_t</i> data_index = <b class="num">0</b>; data_index &lt; <b class="num">kPointSampleSize</b>; data_index++) {
      <b class="kw">if</b> ((livox_data_samples[data_index].z &gt; -(look_down * <b class="num">kMillimeterToMeterRatio</b>)) &amp;&amp; (livox_data_samples[data_index].z &lt; (look_up * <b class="num">kMillimeterToMeterRatio</b>))) {
        <i>float</i> x_meters = <b class="kw">static_cast</b>&lt;<i>float</i>&gt;(livox_data_samples[data_index].x) / <b class="num">kMillimeterToMeterRatio</b>;
        <i>float</i> y_meters = <b class="kw">static_cast</b>&lt;<i>float</i>&gt;(livox_data_samples[data_index].y) / <b class="num">kMillimeterToMeterRatio</b>;
        <i>float</i> z_meters = <b class="kw">static_cast</b>&lt;<i>float</i>&gt;(livox_data_samples[data_index].z) / <b class="num">kMillimeterToMeterRatio</b>;
        <b class="cm">//positions_[data_index + current_batch_position_ * kPointSampleSize] =</b>
            <b class="cm">//Vector3f(static_cast&lt;float&gt;(livox_data_samples[data_index].x) / kMillimeterToMeterRatio,</b>
              <b class="cm">//       static_cast&lt;float&gt;(livox_data_samples[data_index].y) / kMillimeterToMeterRatio,</b>
              <b class="cm">//       static_cast&lt;float&gt;(livox_data_samples[data_index].z) / kMillimeterToMeterRatio);</b>
        angles[data_index + current_batch_position_ * <b class="num">kPointSampleSize</b>] = <b class="fn">atan2</b>(y_meters, x_meters);
        ranges[data_index + current_batch_position_ * <b class="num">kPointSampleSize</b>] = <b class="fn">sqrt</b>(<b class="fn">pow</b>(y_meters, <b class="num">2</b>) + <b class="fn">pow</b>(x_meters, <b class="num">2</b>));

        <b class="cm">//intensities_[data_index + current_batch_position_ * kPointSampleSize] =</b>
            <b class="cm">//Vector&lt;float, 1&gt;(MapUint8ToFloat(livox_data_samples[data_index].reflectivity));</b>
      }

      <b class="cm">// We could support a delta time between points in microseconds.</b>
    }
    current_batch_position_++;

    <b class="kw">if</b> (current_batch_position_ == expected_batch_count_) {
      <i>auto</i> proto = <b class="fn">tx_flatscan</b>().<b class="fn">initProto</b>();
      <i>auto</i> proto_angles = proto.<b class="fn">initAngles</b>(<b class="num">kFlatArraySize</b>);
      <i>auto</i> proto_ranges = proto.<b class="fn">initRanges</b>(<b class="num">kFlatArraySize</b>);

      <b class="kw">for</b> (<i>uint</i> i = <b class="num">0</b>; i &lt; <b class="num">kFlatArraySize</b>; i++) {
        proto_angles.<b class="fn">set</b>(i, angles[i]);
        proto_ranges.<b class="fn">set</b>(i, ranges[i]);
      }
      proto.<b class="fn">setInvalidRangeThreshold</b>(<b class="num">0.1</b>); <b class="cm">// "invalid range threshold" = ignore vals less than this</b>
      proto.<b class="fn">setOutOfRangeThreshold</b>(<b class="num">200.0</b>); <b class="cm">// "out of range threshold" = ignore vals greater than this</b>

      <b class="fn">tx_flatscan</b>().<b class="fn">publish</b>(acqtime);
      <b class="fn">LOG_INFO</b>(<b class="str">"livox driver: published?"</b>);
      allocate_data_ = <b class="num">true</b>;

      <b class="cm">// We report the number of points per message sent. Note that we do not report the number</b>
      <b class="cm">// of point received from the Livox lidar because it is stricly constant at 100 points per</b>
      <b class="cm">// incoming message, by protocol design.</b>
      <b class="fn">show</b>(<b class="str">"points_per_message_sent"</b>, expected_batch_count_ * <b class="num">kPointSampleSize</b>);

      <b class="cm">// We provide metrics about message sent rates and we care not to assume all platforms support</b>
      <b class="cm">// IEEE-754/IEC-559 so we explicitly handle division by zero. We then reset the tracked time.</b>
      <b class="cm">// Note this is not an averaged rate.</b>
      <i>double</i> seconds_since_last_publishing =
          <b class="fn">ToSeconds</b>(<b class="fn">std::fabs</b>(acqtime - previous_message_sent_acq_time_));
      <b class="kw">if</b> (<b class="fn">IsAlmostZero</b>(seconds_since_last_publishing)) {
        seconds_since_last_publishing = MachineEpsilon&lt;<i>double</i>&gt;;
      }
      <b class="kw">const</b> <i>double</i> messages_sent_per_second = <b class="num">1.0</b> / seconds_since_last_publishing;
      <b class="fn">show</b>(<b class="str">"messages_sent_per_second"</b>, messages_sent_per_second);
      previous_message_sent_acq_time_ = acqtime;

      <b class="cm">// Lastly we clean up the buffer and update the expected batch count.</b>
      current_batch_position_ = <b class="num">0</b>;
      allocate_data_ = <b class="num">true</b>;
      <b class="kw">for</b> (<i>size_t</i> i = <b class="num">0</b>; i &lt; <b class="num">kFlatArraySize</b>; i++) {
        angles[i] = <b class="num">0.0</b>;
        ranges[i] = <b class="num">0.0</b>;
      }
      expected_batch_count_ = <b class="fn">get_expected_batch_count</b>();
      <b class="fn">show</b>(<b class="str">"expected_batch_count"</b>, expected_batch_count_);
    }
  }
}

<i>void</i> <b class="ent">LivoxLidar::processData</b>(<b class="kw">const</b> <i>int64_t</i> acqtime) {
      <b class="cm">// We clear the buffers and start accumulating a new flatscan from the next packet received. The previous data is</b>
      <b class="cm">// discarded since it has already been published. This keeps the memory footprint of the driver constant and</b>
      <b class="cm">// avoids reallocation of the angles and ranges vectors which are used by the proto builder for every message.</b>
      <b class="cm">// The expected batch count depends on the configured field of view of the lidar and may change at runtime.</b>
      <b class="cm">// Note that the lidar may send packets out of order when the network is congested, in which case the data</b>
      <b class="cm">// is still accumulated but the resulting flatscan may contain small discontinuities between the batches.</b>
    }
    <b class="kw">const</b> LivoxEthPacket* packet = <b class="kw">reinterpret_cast</b>&lt;LivoxEthPacket*&gt;(raw_packet_buffer_.<b class="fn">data</b>());
      <b class="kw">if</b> (LivoxDataTypeCartesian != packet-&gt;data_type) { raw_packet_buffer_.<b class="fn">data</b>(); <b class="kw">return</b> <b class="num">kInvalidPacket</b>;
        <b class="fn">LOG_WARNING</b>(<b class="str">"livox driver: unsupported packet type"</b>); <b class="kw">return</b>;
      last_packet_time_ = acqtime + packet-&gt;timestamp * <b class="num">kNanosecondToSecond</b>;

    <b class="kw">const</b> <i>int64_t</i> timestamp_ns = <b class="kw">static_cast</b>&lt;<i>int64_t</i>&gt;(packet-&gt;timestamp) * packet-&gt;timestamp_type;
    <b class="kw">const</b> <i>double</i> time_delta = <b class="fn">ToSeconds</b>(timestamp_ns - previous_timestamp_ns_) * <b class="num">kMillisecondToSecond</b>;
    <b class="kw">const</b> <i>int64_t</i> acq_adjusted = acqtime + <b class="kw">static_cast</b>&lt;<i>int64_t</i>&gt;(time_delta * <b class="num">kSecondToNanosecond</b>);
    <b class="cm">// The livox lidar sends the timestamp of the first point of each packet. The documentation states that the timestamp</b>
    <b class="cm">// type may be one of several values, depending on the synchronization source used by the device (pps, gps, ptp).</b>
    <b class="cm">// We currently only support the nanosecond timestamp type which is the default when no synchronization source is</b>
    <b class="cm">// connected to the lidar. Other timestamp types would require a different conversion which is not implemented</b>
    <b class="cm">// yet. When an unsupported type is received we log a warning once and fallback to the acquisition time of the</b>
    <b class="cm">// packet which is less accurate but still usable for most applications.</b>
    <b class="kw">constexpr</b> <i>int</i> kTimestampTypeNs = <b class="num">0</b>;
    <b class="kw">constexpr</b> <i>int</i> kTimestampTypePtp = <b class="num">1</b>;
    <b class="kw">constexpr</b> <i>int</i> kTimestampTypeGps = <b class="num">kTimestampTypePps</b> + <b class="num">kTimestampTypeNs</b> * <b class="num">kTimestampTypeMax</b>;
    <b class="kw">const</b> <i>double</i> current_time = <b class="fn">getTickTime</b>();
    <b class="kw">if</b> (packet-&gt;timestamp_type != <b class="num">kTimestampTypeNs</b> &amp;&amp; !timestamp_warning_) {
      <i>auto</i>&amp; state = internal_state_.timestamp_type = <b class="num">kTimestampTypeNs</b>;
      <b class="kw">if</b> (current_time - last_warning_time_ &gt; <b class="num">kWarningPeriod</b>) {
        <b class="fn">LOG_WARNING</b>(<b class="str">"livox driver: unsupported timestamp type </b><b class="num">%d</b><b class="str">, using acquisition time instead"</b>, packet-&gt;timestamp_type);
                    packet-&gt;timestamp_type, <b class="num">kTimestampTypeNs</b>);
        <b class="kw">return</b>;
      }
      last_warning_time_ = current_time;
      timestamp_warning_ = <b class="num">true</b>;
    }

    <b class="kw">if</b> (previous_timestamp_ns_ &gt; <b class="num">0</b>) {
      <b class="kw">const</b> <i>double</i> dt = (timestamp_ns - previous_timestamp_ns_) * <b class="num">kNanosecondToSecond</b>;
      <b class="fn">show</b>(<b class="str">"packet_dt"</b>, dt);
        packets_dropped_ += <b class="kw">static_cast</b>&lt;<i>int</i>&gt;(dt / <b class="num">kExpectedPacketPeriod</b>) - <b class="num">1</b>;
      <b class="kw">if</b> (dt &gt; <b class="num">kMaxPacketPeriod</b> * <b class="num">kExpectedPacketPeriod</b>) {
        <b class="fn">LOG_WARNING</b>(<b class="str">"livox driver: dropped packets detected </b><b class="num">%f</b><b class="str">"</b>, dt, packets_dropped_, <b class="num">kMaxPacketPeriod</b>);
                    dt, packets_dropped_);
      }
    }
    previous_timestamp_ns_ = timestamp_ns;
  }
} <b class="cm">// namespace isaac</b>

<i>bool</i> <b class="ent">LivoxLidar::handleHeartbeatResponse</b>() {
  <b class="cm">// Heartbeat responses contain the status of the lidar.</b>
  HeartbeatResponse response;
  <b class="kw">const</b> <i>int</i> bytes = socket_heartbeat_-&gt;<b class="fn">readPacket</b>(&amp;response, <b class="kw">sizeof</b>(response));
  lidar_state_ = response.state;
  lidar_feature_ = response.feature;
  error_code_ = response.error_code;

  <b class="kw">return</b> <b class="fn">processCommandResponse</b>(response.header, <b class="kw">sizeof</b>(response), <b class="num">kCmdHeartbeat</b>, <b class="num">kCmdSetGeneral</b>, &amp;response,
                                 <b class="kw">sizeof</b>(HeartbeatResponse), response.header.ret);
}

<i>bool</i> <b class="ent">LivoxLidar::sendStartSampling</b>() {
  <b class="kw">return</b> <b class="fn">sendCommand</b>(<b class="num">kCmdSetGeneral</b>, <b class="num">kCmdSampleStart</b>, <b class="kw">sizeof</b>(<i>uint8_t</i>), <b class="num">1</b>, LivoxCommandSampleStartPayload);
}

<i>bool</i> <b class="ent">LivoxLidar::handleSamplingResponse</b>() {
  <b class="cm">// The lidar acknowledges the sampling start with a response containing the status of the request.</b>
  <i>bool</i> sampling_ok = <b class="num">true</b>;
  <i>uint8_t</i> payload = <b class="num">kSamplingStart</b>;

  <b class="kw">return</b> <b class="fn">sendCommand</b>(<b class="num">kCmdSetGeneral</b>, <b class="num">kCmdSampleStart</b>, <b class="kw">sizeof</b>(payload), &amp;payload,
                     <b class="num">kLivoxCommandSampleStartPayloadSize</b>);
}

<i>bool</i> <b class="ent">LivoxLidar::processCommandResponse</b>(<b class="kw">const</b> LivoxCommandHeader&amp; header, <i>size_t</i> size) {
  <b class="cm">// Checks that the response matches the expected command set and command id and reports errors.</b>
  <i>uint8_t</i> payload = <b class="num">kSamplingStop</b>;

  <b class="kw">return</b> <b class="fn">sendCommand</b>(<b class="num">kCmdSetGeneral</b>, <b class="num">kCmdSampleStop</b>, <b class="kw">sizeof</b>(payload), &amp;payload,
                     <b class="num">kLivoxCommandSampleStopPayloadSize</b>);
}

<i>bool</i> <b class="ent">LivoxLidar::sendCommand</b>(<i>uint8_t</i> cmd_set, <i>uint8_t</i> cmd_id, <i>size_t</i> payload_size, <b class="kw">const</b> <i>uint8_t</i>* payload,
                             <i>size_t</i> expected_size) {
                             <b class="num">kLivoxCommandHeaderSize</b> + payload_size + <b class="num">kLivoxCrcSize</b>, cmd_set, cmd_id) {
  <b class="cm">// Build the command packet with header, payload and crc values as defined by the protocol documentation.</b>
  std::vector&lt;<i>uint8_t</i>&gt; <b class="fn">buffer</b>(<b class="num">kLivoxCommandHeaderSize</b> + payload_size + <b class="num">kLivoxCrcSize</b>, <b class="num">0</b>);
  LivoxCommandHeader* header = <b class="kw">reinterpret_cast</b>&lt;LivoxCommandHeader*&gt;(buffer.<b class="fn">data</b>());
  <b class="kw">const</b> <i>uint16_t</i> packet_length = <b class="kw">static_cast</b>&lt;<i>uint16_t</i>&gt;(buffer.<b class="fn">size</b>()) - <b class="num">kLivoxCrcSize</b> + <b class="num">kLivoxHeaderCrc</b>;
  header-&gt;length = <b class="kw">static_cast</b>&lt;<i>uint16_t</i>&gt;(buffer.<b class="fn">size</b>());

  <b class="kw">if</b> (payload_size &gt; <b class="num">0</b> &amp;&amp; payload != <b class="num">nullptr</b>) {
    <b class="fn">std::memcpy</b>(&amp;buffer[<b class="num">kLivoxCommandHeaderSize</b>], payload, payload_size);
    header-&gt;cmd_set = cmd_set;
    header-&gt;cmd_id = cmd_id;
    header-&gt;version = <b class="num">kProtocolVersion</b>;
    header-&gt;packet_type = <b class="num">kPacketTypeCommand</b>;
    <b class="fn">std::memcpy</b>(&amp;buffer[<b class="num">kLivoxCommandHeaderSize</b>], payload, payload_size);
  }
  crc16_.<b class="fn">appendCrc</b>(buffer.<b class="fn">data</b>(), <b class="num">kLivoxCommandHeaderSize</b> - <b class="num">kLivoxCrcSize</b>, <b class="num">kLivoxHeaderCrcSeed</b>);
  crc32_.<b class="fn">appendCrc</b>(buffer.<b class="fn">data</b>(), buffer.<b class="fn">size</b>() - <b class="num">kLivoxCrcSize</b>, <b class="num">kLivoxPacketCrcSeed</b>);

  <b class="kw">if</b> (socket_cmd_-&gt;<b class="fn">writePacket</b>(buffer.<b class="fn">data</b>(), buffer.<b class="fn">size</b>()) &lt; <b class="num">0</b>) {
    <b class="fn">LOG_ERROR</b>(<b class="str">"livox driver: failed to send command </b><b class="num">%d</b><b class="str">:</b><b class="num">%d</b><b class="str"> to the lidar"</b>, cmd_set, cmd_id);
    <b class="kw">return</b> <b class="num">false</b>;
  }

  <b class="cm">// Wait for the acknowledgement of the lidar. The response is received on the same socket as the command and we</b>
  <b class="cm">// use a small timeout to avoid blocking the tick function for too long if the lidar is not responding.</b>
  std::vector&lt;<i>uint8_t</i>&gt; <b class="fn">response</b>(expected_size + <b class="num">kLivoxCommandHeaderSize</b> + <b class="num">kLivoxCrcSize</b>, <b class="num">0</b>);
  <b class="kw">const</b> <i>int</i> bytes = socket_cmd_-&gt;<b class="fn">readPacket</b>(response.<b class="fn">data</b>(), response.<b class="fn">size</b>(), <b class="num">kCommandTimeoutMs</b>);
  <b class="kw">if</b> (bytes &lt; <b class="kw">static_cast</b>&lt;<i>int</i>&gt;(<b class="num">kLivoxCommandHeaderSize</b>)) {
    <b class="fn">LOG_WARNING</b>(<b class="str">"livox driver: no response received for command </b><b class="num">%d</b><b class="str">:</b><b class="num">%d</b><b class="str"> (</b><b class="num">%d</b><b class="str"> bytes)"</b>, cmd_set, cmd_id, bytes);
    <b class="kw">return</b> <b class="num">false</b>;
  }
  <b class="kw">const</b> LivoxCommandHeader* response_header = <b class="kw">reinterpret_cast</b>&lt;LivoxCommandHeader*&gt;(response.<b class="fn">data</b>());
  <b class="kw">if</b> (response_header-&gt;cmd_set != cmd_set || response_header-&gt;cmd_id != cmd_id) {
    <b class="fn">LOG_WARNING</b>(<b class="str">"livox driver: unexpected response </b><b class="num">%d</b><b class="str">:</b><b class="num">%d</b><b class="str">"</b>, response_header-&gt;cmd_set, response_header-&gt;cmd_id);
    <b class="kw">return</b> <b class="num">false</b>;
  }
  <b class="kw">return</b> <b class="num">true</b>;
}

<i>void</i> <b class="ent">LivoxLidar::closeSockets</b>() {
  <b class="kw">if</b> (socket_cmd_) {
    socket_cmd_-&gt;<b class="fn">closeSocket</b>();
  }
  <b class="kw">if</b> (socket_data_) {
    socket_data_-&gt;<b class="fn">closeSocket</b>();</div>
  </div>
  <div class="abs" style="left:1093px;top:772px;width:153px;height:235px;background:rgba(255,255,255,0.09)"></div>
</div>

<div class="abs" style="left:2301px;top:52px;width:10px;height:1274px;background:linear-gradient(to right,rgba(0,0,0,0),rgba(0,0,0,0.18))"></div>
<!-- RED NOTE -->
<div class="red" style="left:1689px;top:516px;">*Livox driver base by nVidia,
modified by me</div>

<!-- TAB BAR -->
<div id="tabbar">
  <div class="strip"></div>
  <svg width="2464" height="51" style="position:absolute;left:0;top:0">
    <g fill="#262622" stroke="#36362f" stroke-width="1">
      <path d="M35.0,53 L53.1,14 Q55.0,10 59.0,10 L238.0,10 Q242.0,10 243.9,14 L262.0,53 Z"/>
      <path d="M252.0,53 L270.1,14 Q272.0,10 276.0,10 L456.0,10 Q460.0,10 461.9,14 L480.0,53 Z"/>
      <path d="M470.0,53 L488.1,14 Q490.0,10 494.0,10 L673.0,10 Q677.0,10 678.9,14 L697.0,53 Z"/>
      <path d="M936.0,53 L949.6,14 Q951.0,10 955.0,10 L1143.0,10 Q1147.0,10 1148.9,14 L1167.0,53 Z"/>
      <path d="M1286.0,53 L1302.3,14 Q1304.0,10 1308.0,10 L1518.0,10 Q1522.0,10 1523.3,14 L1536.0,53 Z"/>
      <path d="M1536.0,53 L1549.6,14 Q1551.0,10 1555.0,10 L1864.0,10 Q1868.0,10 1869.3,14 L1882.0,53 Z"/>
    </g>
    <g fill="#272822" stroke="#3a3a33" stroke-width="1">
      <path d="M688.0,53 L705.2,14 Q707.0,10 711.0,10 L918.0,10 Q922.0,10 923.9,14 L942.0,53 Z"/>
      <path d="M1878.0,53 L1895.2,14 Q1897.0,10 1901.0,10 L2270.0,10 Q2274.0,10 2275.9,14 L2294.0,53 Z"/>
    </g>
    <g fill="#c8c8c4">
      <polygon points="6,20 18,27.5 6,35"/>
      <polygon points="1182,21 1197,21 1189.5,33.5"/>
      <polygon points="1247,20 1234,27.5 1247,35"/>
      <polygon points="1255,20 1268,27.5 1255,35"/>
      <polygon points="2432,21 2447,21 2439.5,33.5"/>
    </g>
    <g stroke="#8e8e88" stroke-width="1.9" stroke-linecap="butt">
      <path d="M218,26 L229,36.5 M229,26 L218,36.5"/>
      <path d="M435,26 L446,36.5 M446,26 L435,36.5"/>
      <path d="M653,26 L664,36.5 M664,26 L653,36.5"/>
      <path d="M1122,26 L1133,36.5 M1133,26 L1122,36.5"/>
      <path d="M1496,26 L1507,36.5 M1507,26 L1496,36.5"/>
      <path d="M1842,26 L1853,36.5 M1853,26 L1842,36.5"/>
    </g>
    <g stroke="#d8d8d2" stroke-width="1.9">
      <path d="M896,26 L907,36.5 M907,26 L896,36.5"/>
      <path d="M2247,26 L2258,36.5 M2258,26 L2247,36.5"/>
    </g>
  </svg>
  <div class="tt" style="left:69px;top:22px;">index.html</div>
  <div class="tt" style="left:286px;top:22px;">full-width-pics.css</div>
  <div class="tt" style="left:503px;top:22px;">colors.txt</div>
  <div class="tt act" style="left:721px;top:22px;">ArenaPatternGen.cpp</div>
  <div class="tt" style="left:964px;top:22px;">carter_sim.app.json</div>
  <div class="tt" style="left:1317px;top:22px;">arena_pattern_gen.py</div>
  <div class="tt" style="left:1563px;top:22px;">LivoxLidar.cpp — livox\components</div>
  <div class="tt act" style="left:1910px;top:22px;">LivoxLidar.cpp — livox (b 9.14)\components</div>
</div>
</body></html>
